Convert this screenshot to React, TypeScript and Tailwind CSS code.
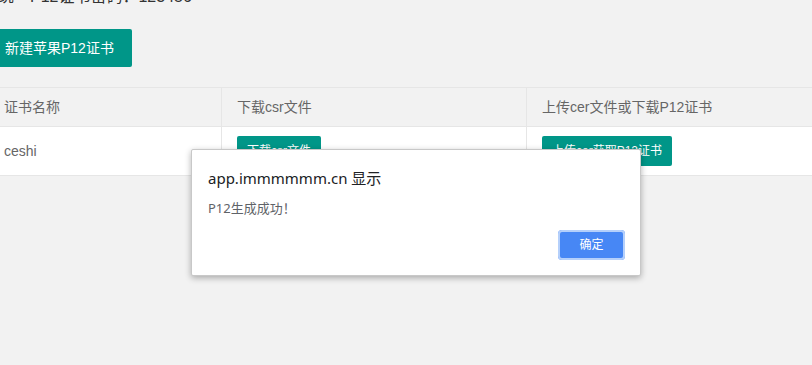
import React from 'react';

const rows = [{ id: 1, name: 'ceshi' }];

export default function App() {
  return (
    <div className="relative min-h-screen bg-[#f2f2f2] overflow-hidden font-['Liberation_Sans','Noto_Sans_CJK_SC',sans-serif] text-[#666]">
      <div className="-ml-[13px] -mt-[15px] w-[900px]">
        <div className="pl-[11px] text-[16px] leading-[24px] text-[#333]">统一P12证书密码：123456</div>

        <button className="mt-[20px] h-[38px] px-[18px] bg-[#009688] text-white text-[14px] rounded-[2px] whitespace-nowrap">
          新建苹果P12证书
        </button>

        <table className="mt-[20px] ml-[1px] border-collapse text-[14px] leading-[20px] w-[960px]">
          <thead>
            <tr className="bg-[#f2f2f2]">
              <th className="w-[233px] border border-[#e6e6e6] px-[15px] py-[9px] text-left font-normal">证书名称</th>
              <th className="w-[305px] border border-[#e6e6e6] px-[15px] py-[9px] text-left font-normal">下载csr文件</th>
              <th className="border border-[#e6e6e6] px-[15px] py-[9px] text-left font-normal">上传cer文件或下载P12证书</th>
            </tr>
          </thead>
          <tbody>
            {rows.map((r) => (
              <tr key={r.id} className="bg-white">
                <td className="border border-[#e6e6e6] px-[15px] py-[9px]">{r.name}</td>
                <td className="border border-[#e6e6e6] px-[15px] py-[9px]">
                  <button className="h-[30px] px-[10px] bg-[#009688] text-white text-[12px] rounded-[2px] whitespace-nowrap align-middle">
                    下载csr文件
                  </button>
                </td>
                <td className="border border-[#e6e6e6] px-[15px] py-[9px]">
                  <button className="h-[30px] px-[10px] bg-[#009688] text-white text-[12px] rounded-[2px] whitespace-nowrap align-middle">
                    上传cer获取P12证书
                  </button>
                </td>
              </tr>
            ))}
          </tbody>
        </table>
      </div>

      {/* alert dialog */}
      <div className="absolute left-[191px] top-[149px] w-[450px] h-[127px] bg-white border border-[#c8c8c8] rounded-[2px] shadow-[0_2px_6px_rgba(0,0,0,0.3)] font-['Noto_Sans','Noto_Sans_CJK_SC',sans-serif] flex flex-col pl-[16px] pr-[15px] pt-[16px] pb-[15px]">
        <div className="text-[15px] leading-[24px] text-[#202124]">app.immmmmm.cn 显示</div>
        <div className="mt-[8px] text-[13px] leading-[20px] text-[#5f6368]">P12生成成功！</div>
        <div className="mt-auto flex justify-end">
          <button className="w-[67px] h-[30px] rounded-[4px] bg-[#4787f5] text-white text-[12px] ring-2 ring-[#b5d0fb] ring-inset">
            确定
          </button>
        </div>
      </div>
    </div>
  );
}
